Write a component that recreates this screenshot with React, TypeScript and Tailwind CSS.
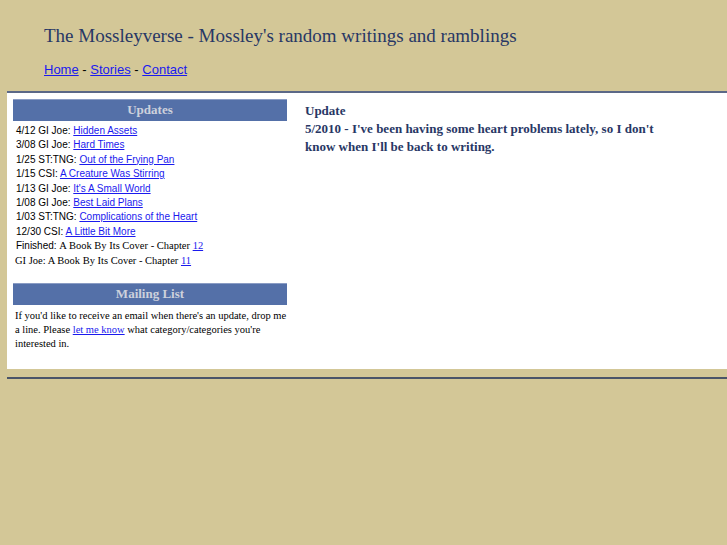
import React from 'react';

const updates: { date: string; show: string; title: string }[] = [
  { date: '4/12', show: 'GI Joe:', title: 'Hidden Assets' },
  { date: '3/08', show: 'GI Joe:', title: 'Hard Times' },
  { date: '1/25', show: 'ST:TNG:', title: ' Out of the Frying Pan' },
  { date: '1/15', show: 'CSI:', title: 'A Creature Was Stirring' },
  { date: '1/13', show: 'GI Joe:', title: "It's A Small World" },
  { date: '1/08', show: 'GI Joe:', title: 'Best Laid Plans' },
  { date: '1/03', show: 'ST:TNG:', title: 'Complications of the Heart' },
  { date: '12/30', show: 'CSI:', title: 'A Little Bit More' },
];

const serif = { fontFamily: '"Liberation Serif", "DejaVu Serif", serif' };

const SectionHeader: React.FC<{ label: string }> = ({ label }) => (
  <div
    className="h-[22px] bg-[#5470a8] border-t border-[#8a9cc4] text-center text-[13px] font-bold leading-[20px] text-[#cdd1dc]"
    style={serif}
  >
    {label}
  </div>
);

export default function App() {
  return (
    <div
      className="min-h-[545px] bg-[#d3c797] pb-10"
      style={{ fontFamily: '"Liberation Sans", Arial, sans-serif' }}
    >
      <div className="pl-[44px] pt-[23px]">
        <h1 className="text-[19px] leading-[26px] text-[#283765]" style={serif}>
          The Mossleyverse - Mossley's random writings and ramblings
        </h1>
        <nav className="mt-[13px] text-[13px] leading-[16px] text-black">
          <a href="#" className="text-[#1a1aee] underline">Home</a>
          {' - '}
          <a href="#" className="text-[#1a1aee] underline">Stories</a>
          {' - '}
          <a href="#" className="text-[#1a1aee] underline">Contact</a>
        </nav>
      </div>

      <div className="ml-[7px] mt-[13px] flex h-[278px] border-t-2 border-[#5b6887] bg-white pl-[6px] pt-[6px]">
        <div className="w-[274px] shrink-0">
          <SectionHeader label="Updates" />
          <ul className="mt-[3px] pl-[3px] text-[10px] leading-[14.4px] text-black">
            {updates.map((u) => (
              <li key={u.title}>
                {u.date} {u.show}{' '}
                <a href="#" className="text-[#1a1aee] underline">{u.title}</a>
              </li>
            ))}
            <li>
              Finished:{' '}
              <span className="text-[10.5px]" style={serif}>
                A Book By Its Cover - Chapter{' '}
                <a href="#" className="text-[#1a1aee] underline">12</a>
              </span>
            </li>
            <li className="-ml-[1px] text-[10.5px]" style={serif}>
              GI Joe: A Book By Its Cover - Chapter{' '}
              <a href="#" className="text-[#1a1aee] underline">11</a>
            </li>
          </ul>

          <div className="mt-[15px]">
            <SectionHeader label="Mailing List" />
          </div>
          <p className="mt-[4px] pl-[2px] text-[10.5px] leading-[14px] text-black" style={serif}>
            If you'd like to receive an email when there's an update, drop me a line. Please{' '}
            <a href="#" className="text-[#1a1aee] underline">let me know</a> what category/categories you're
            interested in.
          </p>
        </div>

        <div
          className="ml-[18px] mt-[3px] w-[356px] text-[13px] font-bold leading-[18px] text-[#283765]"
          style={serif}
        >
          <div>Update</div>
          <div>
            5/2010 - I've been having some heart problems lately, so I don't know when I'll be back to writing.
          </div>
        </div>
      </div>

      <div className="ml-[7px] mt-[8px] border-t-2 border-[#4a5468]" />
    </div>
  );
}
